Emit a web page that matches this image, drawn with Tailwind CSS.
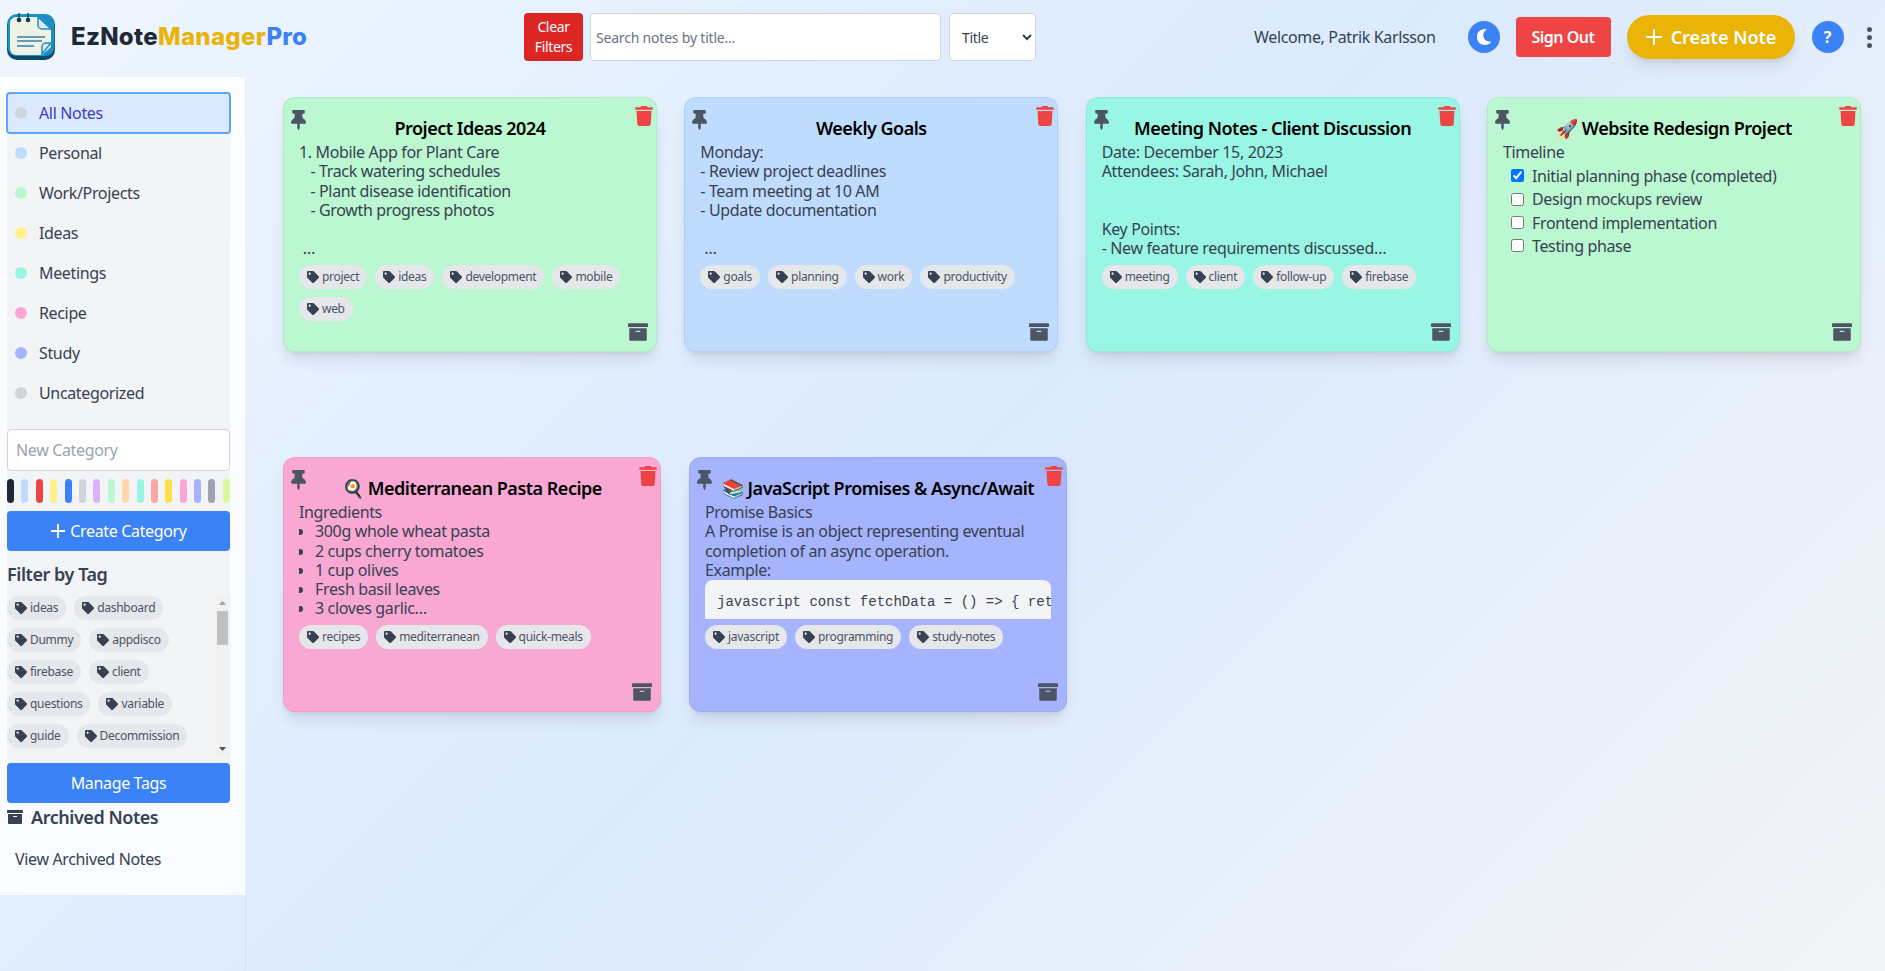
<!DOCTYPE html>
<html lang="en">
<head>
    <meta charset="UTF-8">
    <title>EzNoteManagerPro</title>
    <script src="https://cdn.jsdelivr.net/npm/@tailwindcss/browser@4"></script>
</head>
<body class="bg-[linear-gradient(135deg,#eff6ff_0%,#dbeafe_50%,#f3f4f6_100%)] font-['Noto_Sans',sans-serif] text-[#374151] tracking-[-0.35px] h-[971px] overflow-hidden">
    <!-- Icon sprite -->
    <svg class="hidden">
        <symbol id="pin" viewBox="0 0 384 512"><path d="M298.028 214.267L285.793 96H328c13.255 0 24-10.745 24-24V24c0-13.255-10.745-24-24-24H56C42.745 0 32 10.745 32 24v48c0 13.255 10.745 24 24 24h42.207L85.972 214.267C37.465 236.82 0 277.261 0 328c0 13.255 10.745 24 24 24h136v104.007c0 1.242.289 2.467.845 3.578l24 48c2.941 5.882 11.364 5.893 14.311 0l24-48a8.008 8.008 0 0 0 .845-3.578V352h136c13.255 0 24-10.745 24-24-.001-51.183-37.983-91.42-85.973-113.733z"/></symbol>
        <symbol id="trash" viewBox="0 0 448 512"><path d="M432 32H312l-9.4-18.7A24 24 0 0 0 281.1 0H166.8a23.72 23.72 0 0 0-21.4 13.3L136 32H16A16 16 0 0 0 0 48v32a16 16 0 0 0 16 16h416a16 16 0 0 0 16-16V48a16 16 0 0 0-16-16zM53.2 467a48 48 0 0 0 47.9 45h245.8a48 48 0 0 0 47.9-45L416 128H32z"/></symbol>
        <symbol id="archive" viewBox="0 0 512 512"><path d="M32 448c0 17.7 14.3 32 32 32h384c17.7 0 32-14.3 32-32V160H32v288zm160-212c0-6.6 5.4-12 12-12h104c6.6 0 12 5.4 12 12v8c0 6.6-5.4 12-12 12H204c-6.6 0-12-5.4-12-12v-8zM480 32H32C14.3 32 0 46.3 0 64v48c0 8.8 7.2 16 16 16h480c8.8 0 16-7.2 16-16V64c0-17.7-14.3-32-32-32z"/></symbol>
        <symbol id="tag" viewBox="0 0 512 512"><path d="M0 252.118V48C0 21.49 21.49 0 48 0h204.118a48 48 0 0 1 33.941 14.059l211.882 211.882c18.745 18.745 18.745 49.137 0 67.882L293.823 497.941c-18.745 18.745-49.137 18.745-67.882 0L14.059 286.059A48 48 0 0 1 0 252.118zM112 64c-26.51 0-48 21.49-48 48s21.49 48 48 48 48-21.49 48-48-21.49-48-48-48z"/></symbol>
        <symbol id="moon" viewBox="0 0 512 512"><path d="M283.211 512c78.962 0 151.079-35.925 198.857-94.792 7.068-8.708-.639-21.43-11.562-19.35-124.203 23.654-238.262-71.576-238.262-196.954 0-72.222 38.662-138.635 101.498-174.394 9.686-5.512 7.25-20.197-3.756-22.23A258.156 258.156 0 0 0 283.211 0c-141.309 0-256 114.511-256 256 0 141.309 114.511 256 256 256z"/></symbol>
        <symbol id="plus" viewBox="0 0 16 16"><path d="M8 1v14M1 8h14" stroke="currentColor" stroke-width="1.8" fill="none"/></symbol>
    </svg>

    <!-- Header -->
    <header class="h-[74px] mb-[3px] flex items-center">
        <svg class="w-12 h-12 ml-[7px] shrink-0" viewBox="0 0 48 48">
            <rect x="0" y="2" width="48" height="45" rx="10" fill="#0c4a6e"/>
            <rect x="0.5" y="1" width="47" height="42" rx="9" fill="#1d8fc4"/>
            <path d="M9 4h22l13 12v18l-9 8H9a6 6 0 0 1-6-6V10a6 6 0 0 1 6-6z" fill="#eef2e6"/>
            <path d="M31 4l13 12h-9a4 4 0 0 1-4-4z" fill="#dfe9ee" stroke="#1d8fc4" stroke-width="1.5"/>
            <path d="M44 30l-9 11v-7a4 4 0 0 1 4-4z" fill="#dfe9ee" stroke="#1d8fc4" stroke-width="1.5"/>
            <path d="M10 24h28M10 28h25M10 33h17" stroke="#3b7ea6" stroke-width="1.3"/>
            <circle cx="12" cy="7" r="2.3" fill="#123a52"/><circle cx="21" cy="7" r="2.3" fill="#123a52"/>
            <path d="M12 7V0M21 7V0" stroke="#123a52" stroke-width="1.3"/>
        </svg>
        <div class="ml-4 w-[240px] text-2xl font-extrabold font-['Inter',sans-serif] tracking-[0.3px]"><span class="text-[#1f2937]">EzNote</span><span class="text-[#eab308]">Manager</span><span class="text-[#3b82f6]">Pro</span></div>
        <button class="ml-[213px] w-[59px] h-12 bg-[#dc2626] text-white text-sm rounded leading-5">Clear Filters</button>
        <input class="ml-[7px] w-[351px] h-12 bg-white border border-[#d1d5db] rounded px-[5px] text-sm tracking-[-0.2px] placeholder:text-[#6b7280]" placeholder="Search notes by title...">
        <select class="ml-2 w-[87px] h-12 bg-white border border-[#d1d5db] rounded px-2 text-sm text-[#374151]"><option>Title</option></select>
        <span class="ml-[218px] text-base whitespace-nowrap">Welcome, Patrik Karlsson</span>
        <button class="ml-[32px] w-8 h-8 rounded-full bg-[#3b82f6] flex items-center justify-center text-white"><svg class="w-4 h-4 fill-current"><use href="#moon"/></svg></button>
        <button class="ml-4 w-[95px] h-10 bg-[#ef4444] text-white text-base font-semibold rounded tracking-[-0.5px]">Sign Out</button>
        <button class="ml-4 w-[168px] h-11 bg-[#eab308] text-white text-lg font-semibold rounded-full shadow-lg flex items-center justify-center gap-2 tracking-normal"><svg class="w-[18px] h-[18px]"><use href="#plus"/></svg>Create Note</button>
        <button class="ml-[17px] w-8 h-8 rounded-full bg-[#3b82f6] text-white text-base font-bold">?</button>
        <div class="ml-[23px] flex flex-col gap-[3px]"><i class="w-[5px] h-[5px] rounded-full bg-[#4b5563]"></i><i class="w-[5px] h-[5px] rounded-full bg-[#4b5563]"></i><i class="w-[5px] h-[5px] rounded-full bg-[#4b5563]"></i></div>
    </header>

    <div class="flex">
        <!-- Sidebar -->
        <aside class="w-[246px] h-[818px] shrink-0 bg-white/80 pt-[15px] pl-[7px] pr-[15px]">
            <div class="bg-[#f3f4f6] w-[223px]">
                <a class="flex items-center h-[42px] -mx-px -mb-px px-[7px] gap-3 bg-[#dbeafe] border-2 border-[#60a5fa] rounded text-[#4338ca]"><i class="w-3 h-3 rounded-full bg-[#d1d5db]"></i>All Notes</a>
                <div class="flex items-center h-10 px-2 gap-3"><i class="w-3 h-3 rounded-full bg-[#bfdbfe]"></i>Personal</div>
                <div class="flex items-center h-10 px-2 gap-3"><i class="w-3 h-3 rounded-full bg-[#bbf7d0]"></i>Work/Projects</div>
                <div class="flex items-center h-10 px-2 gap-3"><i class="w-3 h-3 rounded-full bg-[#fef08a]"></i>Ideas</div>
                <div class="flex items-center h-10 px-2 gap-3"><i class="w-3 h-3 rounded-full bg-[#99f6e4]"></i>Meetings</div>
                <div class="flex items-center h-10 px-2 gap-3"><i class="w-3 h-3 rounded-full bg-[#f9a8d4]"></i>Recipe</div>
                <div class="flex items-center h-10 px-2 gap-3"><i class="w-3 h-3 rounded-full bg-[#a5b4fc]"></i>Study</div>
                <div class="flex items-center h-10 px-2 gap-3"><i class="w-3 h-3 rounded-full bg-[#d1d5db]"></i>Uncategorized</div>

                <input class="mt-4 block w-full h-[42px] bg-white border border-[#d1d5db] rounded px-2 text-base placeholder:text-[#9ca3af]" placeholder="New Category">
                <div class="mt-2 flex justify-between h-6">
                    <i class="w-[7px] rounded-full bg-[#1f2937]"></i><i class="w-[7px] rounded-full bg-[#bfdbfe]"></i><i class="w-[7px] rounded-full bg-[#ef4444]"></i><i class="w-[7px] rounded-full bg-[#fef08a]"></i><i class="w-[7px] rounded-full bg-[#3b82f6]"></i><i class="w-[7px] rounded-full bg-[#d1d5db]"></i><i class="w-[7px] rounded-full bg-[#d8b4fe]"></i><i class="w-[7px] rounded-full bg-[#bbf7d0]"></i><i class="w-[7px] rounded-full bg-[#fed7aa]"></i><i class="w-[7px] rounded-full bg-[#99f6e4]"></i><i class="w-[7px] rounded-full bg-[#fca5a5]"></i><i class="w-[7px] rounded-full bg-[#fde047]"></i><i class="w-[7px] rounded-full bg-[#f9a8d4]"></i><i class="w-[7px] rounded-full bg-[#a5b4fc]"></i><i class="w-[7px] rounded-full bg-[#9ca3af]"></i><i class="w-[7px] rounded-full bg-[#d9f99d]"></i>
                </div>
                <button class="mt-2 w-full h-10 bg-[#3b82f6] text-white rounded flex items-center justify-center gap-1"><svg class="w-4 h-4"><use href="#plus"/></svg>Create Category</button>
                <h3 class="mt-[9px] text-lg font-semibold leading-7 tracking-[-0.45px]">Filter by Tag</h3>

                <div class="mt-[8px] flex h-[167px]">
                    <div class="flex-1 flex flex-col gap-2 text-xs text-[#4b5563] tracking-[-0.3px]">
                        <div class="flex gap-2"><span class="h-6 px-2 inline-flex items-center gap-[3px] rounded-full bg-[#e5e7eb]"><svg class="w-3 h-3 fill-[#374151]"><use href="#tag"/></svg>ideas</span><span class="h-6 px-2 inline-flex items-center gap-[3px] rounded-full bg-[#e5e7eb]"><svg class="w-3 h-3 fill-[#374151]"><use href="#tag"/></svg>dashboard</span></div>
                        <div class="flex gap-2"><span class="h-6 px-2 inline-flex items-center gap-[3px] rounded-full bg-[#e5e7eb]"><svg class="w-3 h-3 fill-[#374151]"><use href="#tag"/></svg>Dummy</span><span class="h-6 px-2 inline-flex items-center gap-[3px] rounded-full bg-[#e5e7eb]"><svg class="w-3 h-3 fill-[#374151]"><use href="#tag"/></svg>appdisco</span></div>
                        <div class="flex gap-2"><span class="h-6 px-2 inline-flex items-center gap-[3px] rounded-full bg-[#e5e7eb]"><svg class="w-3 h-3 fill-[#374151]"><use href="#tag"/></svg>firebase</span><span class="h-6 px-2 inline-flex items-center gap-[3px] rounded-full bg-[#e5e7eb]"><svg class="w-3 h-3 fill-[#374151]"><use href="#tag"/></svg>client</span></div>
                        <div class="flex gap-2"><span class="h-6 px-2 inline-flex items-center gap-[3px] rounded-full bg-[#e5e7eb]"><svg class="w-3 h-3 fill-[#374151]"><use href="#tag"/></svg>questions</span><span class="h-6 px-2 inline-flex items-center gap-[3px] rounded-full bg-[#e5e7eb]"><svg class="w-3 h-3 fill-[#374151]"><use href="#tag"/></svg>variable</span></div>
                        <div class="flex gap-2"><span class="h-6 px-2 inline-flex items-center gap-[3px] rounded-full bg-[#e5e7eb]"><svg class="w-3 h-3 fill-[#374151]"><use href="#tag"/></svg>guide</span><span class="h-6 px-2 inline-flex items-center gap-[3px] rounded-full bg-[#e5e7eb]"><svg class="w-3 h-3 fill-[#374151]"><use href="#tag"/></svg>Decommission</span></div>
                    </div>
                    <!-- scrollbar -->
                    <div class="w-[15px] h-40 bg-[#f1f1f1] flex flex-col items-center">
                        <svg class="w-[15px] h-[15px] fill-[#a3a3a3]" viewBox="0 0 15 15"><path d="M4 9l3.5-4 3.5 4z"/></svg>
                        <div class="w-[11px] h-[34px] bg-[#c1c1c1]"></div>
                        <svg class="w-[15px] h-[15px] fill-[#505050] mt-auto" viewBox="0 0 15 15"><path d="M4 6l3.5 4 3.5-4z"/></svg>
                    </div>
                </div>
            </div>
            <button class="block w-[223px] h-10 bg-[#3b82f6] text-white rounded">Manage Tags</button>
            <div class="flex items-center gap-2 text-lg font-semibold leading-7 tracking-[-0.45px]"><svg class="w-4 h-4 fill-[#374151]"><use href="#archive"/></svg>Archived Notes</div>
            <div class="mt-[16px] pl-2 leading-6">View Archived Notes</div>
        </aside>

        <!-- Notes -->
        <main class="flex-1 h-[894px] pl-[37px] pt-5 border-l border-black/5 -ml-px">
            <div class="flex gap-[27.33px]">
                <article class="relative w-[374px] h-[255px] bg-[#bbf7d0] rounded-xl shadow-lg border border-black/5 px-[15px] pt-[16px]">
                    <svg class="absolute left-[7px] top-[12px] w-[15px] h-5 fill-[#4b5563]"><use href="#pin"/></svg>
                    <svg class="absolute right-[3px] top-[8px] w-[18px] h-5 fill-[#ef4444]"><use href="#trash"/></svg>
                    <h2 class="text-lg font-semibold text-black text-center leading-7 mb-px tracking-[-0.5px]">Project Ideas 2024</h2>
                    <div class="h-[116px] overflow-hidden whitespace-pre leading-[19.25px]">1. Mobile App for Plant Care<br>   - Track watering schedules<br>   - Plant disease identification<br>   - Growth progress photos<br><br> …</div>
                    <div class="mt-[6px] flex flex-wrap gap-2 text-xs text-[#4b5563] tracking-[-0.3px]">
                        <span class="h-6 px-2 inline-flex items-center gap-[3px] rounded-full bg-[#e5e7eb]"><svg class="w-3 h-3 fill-[#374151]"><use href="#tag"/></svg>project</span>
                        <span class="h-6 px-2 inline-flex items-center gap-[3px] rounded-full bg-[#e5e7eb]"><svg class="w-3 h-3 fill-[#374151]"><use href="#tag"/></svg>ideas</span>
                        <span class="h-6 px-2 inline-flex items-center gap-[3px] rounded-full bg-[#e5e7eb]"><svg class="w-3 h-3 fill-[#374151]"><use href="#tag"/></svg>development</span>
                        <span class="h-6 px-2 inline-flex items-center gap-[3px] rounded-full bg-[#e5e7eb]"><svg class="w-3 h-3 fill-[#374151]"><use href="#tag"/></svg>mobile</span>
                        <span class="h-6 px-2 inline-flex items-center gap-[3px] rounded-full bg-[#e5e7eb]"><svg class="w-3 h-3 fill-[#374151]"><use href="#tag"/></svg>web</span>
                    </div>
                    <svg class="absolute right-[8px] bottom-[9px] w-5 h-5 fill-[#4b5563]"><use href="#archive"/></svg>
                </article>

                <article class="relative w-[374px] h-[255px] bg-[#bfdbfe] rounded-xl shadow-lg border border-black/5 px-[15px] pt-[16px]">
                    <svg class="absolute left-[7px] top-[12px] w-[15px] h-5 fill-[#4b5563]"><use href="#pin"/></svg>
                    <svg class="absolute right-[3px] top-[8px] w-[18px] h-5 fill-[#ef4444]"><use href="#trash"/></svg>
                    <h2 class="text-lg font-semibold text-black text-center leading-7 mb-px tracking-[-0.5px]">Weekly Goals</h2>
                    <div class="h-[116px] overflow-hidden whitespace-pre leading-[19.25px]">Monday:<br>- Review project deadlines<br>- Team meeting at 10 AM<br>- Update documentation<br><br> …</div>
                    <div class="mt-[6px] flex flex-wrap gap-2 text-xs text-[#4b5563] tracking-[-0.3px]">
                        <span class="h-6 px-2 inline-flex items-center gap-[3px] rounded-full bg-[#e5e7eb]"><svg class="w-3 h-3 fill-[#374151]"><use href="#tag"/></svg>goals</span>
                        <span class="h-6 px-2 inline-flex items-center gap-[3px] rounded-full bg-[#e5e7eb]"><svg class="w-3 h-3 fill-[#374151]"><use href="#tag"/></svg>planning</span>
                        <span class="h-6 px-2 inline-flex items-center gap-[3px] rounded-full bg-[#e5e7eb]"><svg class="w-3 h-3 fill-[#374151]"><use href="#tag"/></svg>work</span>
                        <span class="h-6 px-2 inline-flex items-center gap-[3px] rounded-full bg-[#e5e7eb]"><svg class="w-3 h-3 fill-[#374151]"><use href="#tag"/></svg>productivity</span>
                    </div>
                    <svg class="absolute right-[8px] bottom-[9px] w-5 h-5 fill-[#4b5563]"><use href="#archive"/></svg>
                </article>

                <article class="relative w-[374px] h-[255px] bg-[#99f6e4] rounded-xl shadow-lg border border-black/5 px-[15px] pt-[16px]">
                    <svg class="absolute left-[7px] top-[12px] w-[15px] h-5 fill-[#4b5563]"><use href="#pin"/></svg>
                    <svg class="absolute right-[3px] top-[8px] w-[18px] h-5 fill-[#ef4444]"><use href="#trash"/></svg>
                    <h2 class="text-lg font-semibold text-black text-center leading-7 mb-px tracking-[-0.5px]">Meeting Notes - Client Discussion</h2>
                    <div class="h-[116px] overflow-hidden whitespace-pre leading-[19.25px]">Date: December 15, 2023<br>Attendees: Sarah, John, Michael<br><br><br>Key Points:<br>- New feature requirements discussed…</div>
                    <div class="mt-[6px] flex flex-wrap gap-2 text-xs text-[#4b5563] tracking-[-0.3px]">
                        <span class="h-6 px-2 inline-flex items-center gap-[3px] rounded-full bg-[#e5e7eb]"><svg class="w-3 h-3 fill-[#374151]"><use href="#tag"/></svg>meeting</span>
                        <span class="h-6 px-2 inline-flex items-center gap-[3px] rounded-full bg-[#e5e7eb]"><svg class="w-3 h-3 fill-[#374151]"><use href="#tag"/></svg>client</span>
                        <span class="h-6 px-2 inline-flex items-center gap-[3px] rounded-full bg-[#e5e7eb]"><svg class="w-3 h-3 fill-[#374151]"><use href="#tag"/></svg>follow-up</span>
                        <span class="h-6 px-2 inline-flex items-center gap-[3px] rounded-full bg-[#e5e7eb]"><svg class="w-3 h-3 fill-[#374151]"><use href="#tag"/></svg>firebase</span>
                    </div>
                    <svg class="absolute right-[8px] bottom-[9px] w-5 h-5 fill-[#4b5563]"><use href="#archive"/></svg>
                </article>

                <article class="relative w-[374px] h-[255px] bg-[#bbf7d0] rounded-xl shadow-lg border border-black/5 px-[15px] pt-[16px]">
                    <svg class="absolute left-[7px] top-[12px] w-[15px] h-5 fill-[#4b5563]"><use href="#pin"/></svg>
                    <svg class="absolute right-[3px] top-[8px] w-[18px] h-5 fill-[#ef4444]"><use href="#trash"/></svg>
                    <h2 class="text-lg font-semibold text-black text-center leading-7 mb-px tracking-[-0.5px]">🚀 Website Redesign Project</h2>
                    <div class="leading-[19.25px]">Timeline</div>
                    <ul class="mt-[2px] pl-2">
                        <li class="flex items-center gap-2 h-[23.3px]"><input type="checkbox" checked class="w-[13px] h-[13px]">Initial planning phase (completed)</li>
                        <li class="flex items-center gap-2 h-[23.3px]"><input type="checkbox" class="w-[13px] h-[13px]">Design mockups review</li>
                        <li class="flex items-center gap-2 h-[23.3px]"><input type="checkbox" class="w-[13px] h-[13px]">Frontend implementation</li>
                        <li class="flex items-center gap-2 h-[23.3px]"><input type="checkbox" class="w-[13px] h-[13px]">Testing phase</li>
                    </ul>
                    <svg class="absolute right-[8px] bottom-[9px] w-5 h-5 fill-[#4b5563]"><use href="#archive"/></svg>
                </article>
            </div>

            <div class="mt-[105px] flex gap-7">
                <article class="relative w-[378px] h-[255px] bg-[#f9a8d4] rounded-xl shadow-lg border border-black/5 px-[15px] pt-[16px]">
                    <svg class="absolute left-[7px] top-[12px] w-[15px] h-5 fill-[#4b5563]"><use href="#pin"/></svg>
                    <svg class="absolute right-[3px] top-[8px] w-[18px] h-5 fill-[#ef4444]"><use href="#trash"/></svg>
                    <h2 class="text-lg font-semibold text-black text-center leading-7 mb-px tracking-[-0.5px]">🍳 Mediterranean Pasta Recipe</h2>
                    <div class="h-[116px] overflow-hidden leading-[19.25px]">
                        Ingredients
                        <ul class="list-disc pl-4">
                            <li>300g whole wheat pasta</li>
                            <li>2 cups cherry tomatoes</li>
                            <li>1 cup olives</li>
                            <li>Fresh basil leaves</li>
                            <li>3 cloves garlic…</li>
                        </ul>
                    </div>
                    <div class="mt-[6px] flex flex-wrap gap-2 text-xs text-[#4b5563] tracking-[-0.3px]">
                        <span class="h-6 px-2 inline-flex items-center gap-[3px] rounded-full bg-[#e5e7eb]"><svg class="w-3 h-3 fill-[#374151]"><use href="#tag"/></svg>recipes</span>
                        <span class="h-6 px-2 inline-flex items-center gap-[3px] rounded-full bg-[#e5e7eb]"><svg class="w-3 h-3 fill-[#374151]"><use href="#tag"/></svg>mediterranean</span>
                        <span class="h-6 px-2 inline-flex items-center gap-[3px] rounded-full bg-[#e5e7eb]"><svg class="w-3 h-3 fill-[#374151]"><use href="#tag"/></svg>quick-meals</span>
                    </div>
                    <svg class="absolute right-[8px] bottom-[9px] w-5 h-5 fill-[#4b5563]"><use href="#archive"/></svg>
                </article>

                <article class="relative w-[378px] h-[255px] bg-[#a5b4fc] rounded-xl shadow-lg border border-black/5 px-[15px] pt-[16px]">
                    <svg class="absolute left-[7px] top-[12px] w-[15px] h-5 fill-[#4b5563]"><use href="#pin"/></svg>
                    <svg class="absolute right-[3px] top-[8px] w-[18px] h-5 fill-[#ef4444]"><use href="#trash"/></svg>
                    <h2 class="text-lg font-semibold text-black text-center leading-7 mb-px tracking-[-0.5px] whitespace-nowrap">📚 JavaScript Promises &amp; Async/Await</h2>
                    <div class="h-[116px] overflow-hidden leading-[19.25px]">
                        Promise Basics<br>
                        A Promise is an object representing eventual completion of an async operation.<br>
                        Example:
                        <pre class="bg-[#f3f4f6] rounded-t-lg px-3 py-3 text-sm leading-5 tracking-normal font-['Liberation_Mono',monospace] overflow-hidden">javascript const fetchData = () => { return new Promise((resolve) => {</pre>
                    </div>
                    <div class="mt-[6px] flex flex-wrap gap-2 text-xs text-[#4b5563] tracking-[-0.3px]">
                        <span class="h-6 px-2 inline-flex items-center gap-[3px] rounded-full bg-[#e5e7eb]"><svg class="w-3 h-3 fill-[#374151]"><use href="#tag"/></svg>javascript</span>
                        <span class="h-6 px-2 inline-flex items-center gap-[3px] rounded-full bg-[#e5e7eb]"><svg class="w-3 h-3 fill-[#374151]"><use href="#tag"/></svg>programming</span>
                        <span class="h-6 px-2 inline-flex items-center gap-[3px] rounded-full bg-[#e5e7eb]"><svg class="w-3 h-3 fill-[#374151]"><use href="#tag"/></svg>study-notes</span>
                    </div>
                    <svg class="absolute right-[8px] bottom-[9px] w-5 h-5 fill-[#4b5563]"><use href="#archive"/></svg>
                </article>
            </div>
        </main>
    </div>
</body>
</html>
